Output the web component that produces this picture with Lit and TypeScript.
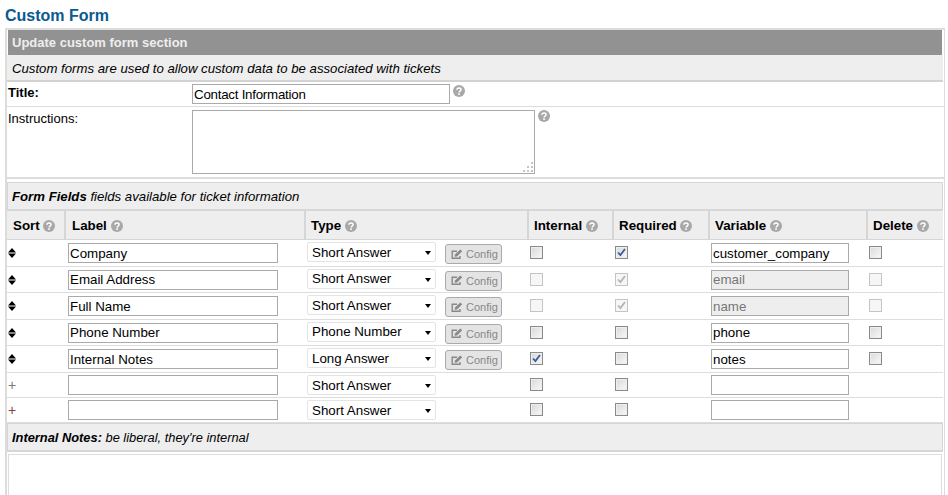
import { LitElement, html, css, svg } from "lit";
import { customElement } from "lit/decorators.js";

type Field = {
  sort: "drag" | "add" | "addred";
  label: string;
  type: string;
  internal: boolean;
  required: boolean;
  variable: string;
  locked: boolean;
  saved: boolean;
  h: string;
};

const FIELDS: Field[] = [
  { sort: "drag", label: "Company", type: "Short Answer", internal: false, required: true, variable: "customer_company", locked: false, saved: true, h: "r27" },
  { sort: "drag", label: "Email Address", type: "Short Answer", internal: false, required: true, variable: "email", locked: true, saved: true, h: "r26" },
  { sort: "drag", label: "Full Name", type: "Short Answer", internal: false, required: true, variable: "name", locked: true, saved: true, h: "r27" },
  { sort: "drag", label: "Phone Number", type: "Phone Number", internal: false, required: false, variable: "phone", locked: false, saved: true, h: "r26" },
  { sort: "drag", label: "Internal Notes", type: "Long Answer", internal: true, required: false, variable: "notes", locked: false, saved: true, h: "r27" },
  { sort: "add", label: "", type: "Short Answer", internal: false, required: false, variable: "", locked: false, saved: false, h: "r25" },
  { sort: "addred", label: "", type: "Short Answer", internal: false, required: false, variable: "", locked: false, saved: false, h: "r25" },
];

const help = html`<svg class="help" viewBox="0 0 12 12" aria-hidden="true">
  <circle cx="6" cy="6" r="6" fill="#a8a8a8"></circle>
  <path d="M3.9 4.7C3.9 3.5 4.8 2.9 6 2.9c1.3 0 2.1.7 2.1 1.7 0 1.5-2 1.5-2 2.9" fill="none" stroke="#fff" stroke-width="1.5"></path>
  <rect x="5.2" y="8.3" width="1.7" height="1.6" fill="#fff"></rect>
</svg>`;

const sortIcon = svg`<path d="M4 0 8 4.5H0ZM0 5.5H8L4 10Z" fill="#000"></path>`;

@customElement("app-root")
export class AppRoot extends LitElement {
  static styles = css`
    :host {
      display: block;
      height: 495px;
      overflow: hidden;
      font-family: "Liberation Sans", Arial, sans-serif;
      font-size: 13px;
      color: #000;
      background: #fff;
    }

    * {
      box-sizing: border-box;
    }

    h1 {
      margin: 0;
      height: 28px;
      padding: 7px 0 0 5px;
      font-size: 16px;
      line-height: 18px;
      font-weight: bold;
      color: #0a5a92;
    }

    .frame {
      width: 940px;
      margin-left: 5px;
      border: solid #dcdcdc;
      border-width: 2px 1px 0 2px;
    }

    .head {
      height: 25px;
      margin: 0 2px 0 1px;
      padding-left: 4px;
      background: #929292;
      color: #eee;
      font-weight: bold;
      line-height: 26px;
    }

    .sub {
      height: 27px;
      margin-right: 1px;
      padding-left: 5px;
      background: #eee;
      border-bottom: 2px solid #d2d2d2;
      font-size: 13.2px;
      font-style: italic;
      line-height: 27px;
    }

    .row {
      display: grid;
      grid-template-columns: 185px 1fr;
      border-bottom: 1px solid #ddd;
    }

    .row.title {
      height: 25px;
    }

    .row.instr {
      height: 72px;
      margin-bottom: 3px;
      border-bottom-width: 2px;
    }

    .row .name {
      padding: 2px 0 0 1px;
      line-height: 18px;
    }

    .row.instr .name {
      padding-top: 3px;
    }

    .control {
      display: flex;
      align-items: flex-start;
      gap: 3px;
    }

    .row.title .control {
      padding-top: 2px;
    }

    .row.instr .control {
      padding-top: 3px;
    }

    .help {
      display: inline-block;
      flex: none;
      width: 12px;
      height: 12px;
      vertical-align: -2px;
    }

    .control .help {
      margin: 1px 0 0 0;
    }

    .row.instr .control .help {
      margin-top: 0;
    }

    input.text,
    textarea {
      display: block;
      border: 1px solid #aaa;
      border-radius: 0;
      padding: 0 0 0 1px;
      margin: 0;
      font-family: inherit;
      font-size: 13.33px;
      color: #000;
      background: #fff;
      outline: none;
    }

    input.text {
      height: 20px;
    }

    input.text.wide {
      width: 258px;
      letter-spacing: -0.25px;
    }

    input.text.label {
      width: 210px;
    }

    input.text.variable {
      width: 138px;
    }

    input.text:disabled {
      background: #eee;
      color: #777;
    }

    textarea {
      resize: none;
    }

    .area {
      position: relative;
      flex: none;
      width: 343px;
      height: 64px;
    }

    .area textarea {
      width: 100%;
      height: 100%;
    }

    .grip {
      position: absolute;
      right: 1px;
      bottom: 1px;
      width: 12px;
      height: 12px;
    }

    .band {
      height: 29px;
      margin-right: 1px;
      padding-left: 4px;
      background: #eee;
      border: 1px solid #d6d6d6;
      border-bottom-width: 2px;
      font-size: 13.2px;
      font-style: italic;
      line-height: 27px;
    }

    .band.short {
      font-size: 12.85px;
    }

    table {
      table-layout: fixed;
      width: 936px;
      border-collapse: separate;
      border-spacing: 0;
    }

    th {
      height: 29px;
      padding: 1px 0 0 6px;
      background: #eee;
      border-right: 2px solid #d6d6d6;
      border-bottom: 1px solid #d6d6d6;
      text-align: left;
      font-size: 13.33px;
      font-weight: bold;
      line-height: 26px;
      white-space: nowrap;
    }

    th:nth-child(n + 3) {
      padding-left: 5px;
    }

    th:last-child {
      border-right: 0;
    }

    td {
      padding: 0;
      border-bottom: 1px solid #ddd;
      vertical-align: middle;
    }

    tr.r27 td {
      height: 27px;
    }

    tr.r26 td {
      height: 26px;
    }

    tr.r25 td {
      height: 25px;
    }

    .sort {
      padding-left: 1px;
    }

    .sort svg {
      display: block;
      width: 8px;
      height: 10px;
    }

    .plus {
      padding-left: 1px;
      font-size: 14px;
      line-height: 14px;
      color: #777;
    }

    .plus.red {
      color: #844;
    }

    .pad-label {
      padding-left: 2px;
    }

    .pad-var {
      padding-left: 1px;
    }

    .type {
      display: flex;
      align-items: flex-start;
      gap: 9px;
      padding-left: 1px;
    }

    .select {
      position: relative;
      flex: none;
      width: 129px;
      height: 20px;
    }

    .select select {
      appearance: none;
      display: block;
      width: 100%;
      height: 100%;
      margin: 0;
      padding: 0 0 0 4px;
      border: 1px solid #e4e4e4;
      border-radius: 2px;
      background: #fff;
      color: #000;
      font-family: inherit;
      font-size: 13.33px;
      outline: none;
    }

    .select::after {
      content: "";
      position: absolute;
      right: 5px;
      top: 9px;
      border: 3.5px solid transparent;
      border-top: 4px solid #000;
      border-bottom: 0;
    }

    .config {
      display: flex;
      align-items: center;
      gap: 3px;
      flex: none;
      width: 57px;
      height: 20px;
      margin: 2px 0 0 0;
      padding: 0 0 0 5px;
      border: 1px solid #aaa;
      border-radius: 3px;
      background: #e4e4e4;
      color: #888;
      font-family: inherit;
      font-size: 11px;
    }

    .config svg {
      flex: none;
      width: 12px;
      height: 11px;
    }

    .cb {
      position: relative;
      display: block;
      width: 13px;
      height: 13px;
      margin: 0 0 1px 1px;
    }

    .cb input {
      appearance: none;
      display: block;
      width: 13px;
      height: 13px;
      margin: 0;
      border: 1px solid #8a8a8a;
      border-radius: 0;
      background: linear-gradient(135deg, #d8d8d8, #f4f4f4 85%);
      box-shadow: inset 0 0 0 1px #eee;
    }

    .cb input:disabled {
      border-color: #c4c4c4;
      background: #f6f6f6;
      box-shadow: none;
    }

    .cb svg {
      position: absolute;
      left: 2px;
      top: 2px;
      width: 9px;
      height: 9px;
    }

    .notes {
      display: block;
      width: 934px;
      height: 100px;
      margin: 2px 0 0 1px;
      border: 1px solid #ddd;
    }
  `;

  private check(on: boolean, off: boolean) {
    return html`<span class="cb">
      <input type="checkbox" .checked=${on} ?disabled=${off} />
      ${on
        ? html`<svg viewBox="0 0 9 9" aria-hidden="true">
            <path d="M1 4.5 3.4 7 8 1" fill="none" stroke=${off ? "#b4b4b4" : "#3a5a9c"} stroke-width="1.8"></path>
          </svg>`
        : null}
    </span>`;
  }

  private renderSort(f: Field) {
    if (f.sort === "drag") {
      return html`<div class="sort"><svg viewBox="0 0 8 10" aria-hidden="true">${sortIcon}</svg></div>`;
    }
    return html`<div class="plus ${f.sort === "addred" ? "red" : ""}">+</div>`;
  }

  private renderField(f: Field) {
    return html`<tr class=${f.h}>
      <td>${this.renderSort(f)}</td>
      <td class="pad-label"><input class="text label" type="text" .value=${f.label} /></td>
      <td>
        <div class="type">
          <div class="select">
            <select>
              <option ?selected=${f.type === "Short Answer"}>Short Answer</option>
              <option ?selected=${f.type === "Phone Number"}>Phone Number</option>
              <option ?selected=${f.type === "Long Answer"}>Long Answer</option>
            </select>
          </div>
          ${f.saved
            ? html`<button class="config" type="button">
                <svg viewBox="0 0 12 11" aria-hidden="true">
                  <path d="M9 7v2.2H1.2V2.2H6" fill="none" stroke="#888" stroke-width="1.4"></path>
                  <path d="M4 5.4 9.3.4l1.9 1.8L6 7.4l-2.4.4Z" fill="#888"></path>
                </svg>
                Config
              </button>`
            : null}
        </div>
      </td>
      <td>${this.check(f.internal, f.locked)}</td>
      <td>${this.check(f.required, f.locked)}</td>
      <td class="pad-var"><input class="text variable" type="text" .value=${f.variable} ?disabled=${f.locked} /></td>
      <td>${f.saved ? this.check(false, f.locked) : null}</td>
    </tr>`;
  }

  render() {
    return html`
      <h1>Custom Form</h1>
      <div class="frame">
        <div class="head">Update custom form section</div>
        <div class="sub">Custom forms are used to allow custom data to be associated with tickets</div>
        <div class="row title">
          <div class="name"><b>Title:</b></div>
          <div class="control">
            <input class="text wide" type="text" value="Contact Information" />
            ${help}
          </div>
        </div>
        <div class="row instr">
          <div class="name">Instructions:</div>
          <div class="control">
            <div class="area">
              <textarea></textarea>
              <svg class="grip" viewBox="0 0 12 12" aria-hidden="true" fill="#c4c4c4">
                <rect x="9" y="1" width="2" height="2"></rect>
                <rect x="5" y="5" width="2" height="2"></rect>
                <rect x="9" y="5" width="2" height="2"></rect>
                <rect x="1" y="9" width="2" height="2"></rect>
                <rect x="5" y="9" width="2" height="2"></rect>
                <rect x="9" y="9" width="2" height="2"></rect>
              </svg>
            </div>
            ${help}
          </div>
        </div>
        <div class="band"><b>Form Fields</b> fields available for ticket information</div>
        <table>
          <colgroup>
            <col style="width:59px" />
            <col style="width:240px" />
            <col style="width:223px" />
            <col style="width:85px" />
            <col style="width:96px" />
            <col style="width:158px" />
            <col style="width:75px" />
          </colgroup>
          <thead>
            <tr>
              <th>Sort ${help}</th>
              <th>Label ${help}</th>
              <th>Type ${help}</th>
              <th>Internal ${help}</th>
              <th>Required ${help}</th>
              <th>Variable ${help}</th>
              <th>Delete ${help}</th>
            </tr>
          </thead>
          <tbody>
            ${FIELDS.map((f) => this.renderField(f))}
          </tbody>
        </table>
        <div class="band short"><b>Internal Notes:</b> be liberal, they're internal</div>
        <textarea class="notes"></textarea>
      </div>
    `;
  }
}
